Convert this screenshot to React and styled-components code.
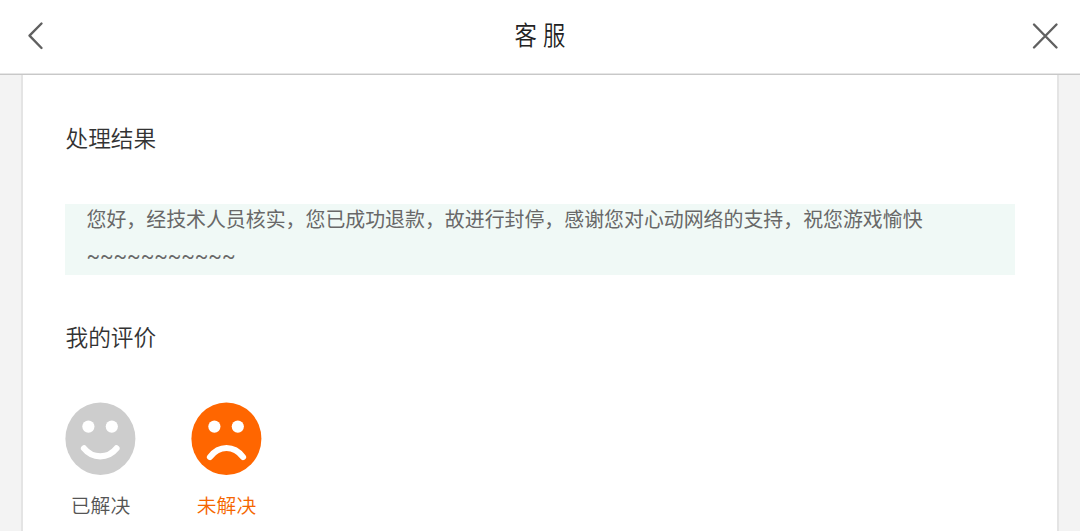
import React, { useState } from "react";
import styled, { createGlobalStyle } from "styled-components";

const GlobalStyle = createGlobalStyle`
  * {
    box-sizing: border-box;
  }
  body {
    margin: 0;
    overflow: hidden;
    background: #f3f3f3;
    font-family: Roboto, "Noto Sans CJK SC", sans-serif;
  }
`

const Page = styled.div`
  display: flex;
  flex-direction: column;
  height: 100vh;
`
const Header = styled.header`
  display: flex;
  flex: none;
  align-items: center;
  justify-content: space-between;
  height: 75px;
  padding: 0 20px 3px 24px;
  background: #fff;
  border-bottom: 1px solid #c8c8c8;
  box-shadow: 0 -1px 0 #e6e6e6 inset;
`
const IconButton = styled.button`
  display: flex;
  padding: 0;
  border: 0;
  background: none;
  color: #606060;
`
const StrokeIcon = styled.svg`
  fill: none;
  stroke: currentColor;
  stroke-width: 2.4;
  stroke-linecap: round;
  stroke-linejoin: round;
`
const Title = styled.h1`
  margin: 1px 0 0 9px;
  font-size: 26px;
  line-height: 36px;
  font-weight: 350;
  letter-spacing: 7px;
  color: #222;
  transform: scaleX(0.86);
`
const Card = styled.main`
  flex: 1;
  min-height: 0;
  margin: 0 21px;
  padding: 44px 42px 0;
  background: #fff;
  border: solid #e4e4e4;
  border-width: 0 2px;
`
const Heading = styled.h2`
  margin: 0;
  padding: 1px 0 0 0.5px;
  font-size: 22.7px;
  line-height: 39px;
  font-weight: 350;
  color: #333;
`
const Reply = styled.p`
  height: 71px;
  margin: 44.5px 0 43.5px;
  padding: 0 21.5px;
  background: #f0f9f6;
  font-size: 19.91px;
  color: #686868;
`
const ReplyLine = styled.span`
  display: block;
  height: 35px;
  line-height: ${props => props.$tight ? '34px' : '36px'};
`
const Ratings = styled.div`
  display: flex;
  gap: 55px;
  margin-top: 44px;
`
const RatingButton = styled.button`
  display: flex;
  flex-direction: column;
  align-items: center;
  width: 71px;
  padding: 0;
  border: 0;
  background: none;
  font-family: inherit;
  font-size: 19.8px;
  font-weight: 350;
  line-height: 30px;
  color: ${props => props.$active ? '#f56600' : '#555'};
`
const Face = styled.svg`
  display: block;
  margin-bottom: 17px;
  color: ${props => props.$active ? '#f60' : '#cdcdcd'};
`

const ratings = [
  { id: 'solved', label: '已解决', mouth: 'M19 46.4 C27.5 57 43 57 51.5 46.4' },
  { id: 'unsolved', label: '未解决', mouth: 'M19 55 C28 43 43 43 52 55' },
]

function Rating(props) {
  return <RatingButton $active={props.active} onClick={props.onSelect}>
    <Face $active={props.active} width="71" height="73" viewBox="0 0 71 73">
      <ellipse cx="35.4" cy="36.7" rx="35" ry="36.2" fill="currentColor"/>
      <circle cx="23.4" cy="24.6" r="6.1" fill="#fff"/>
      <circle cx="46.8" cy="24.6" r="6.1" fill="#fff"/>
      <path d={props.mouth} fill="none" stroke="#fff" strokeWidth="6.2" strokeLinecap="round"/>
    </Face>
    {props.label}
  </RatingButton>
}

function App() {
  const [selected, setSelected] = useState('unsolved');

  return <Page>
    <GlobalStyle/>
    <Header>
      <IconButton aria-label="返回">
        <StrokeIcon width="24" height="30" viewBox="0 0 24 30">
          <path d="M17.5 2.5 L5.5 14.7 L17.5 27"/>
        </StrokeIcon>
      </IconButton>
      <Title>客服</Title>
      <IconButton aria-label="关闭">
        <StrokeIcon width="30" height="30" viewBox="0 0 30 30">
          <path d="M4 3.5 L26.5 26.5 M26.5 3.5 L4 26.5"/>
        </StrokeIcon>
      </IconButton>
    </Header>
    <Card>
      <Heading>处理结果</Heading>
      <Reply>
        <ReplyLine $tight>您好，经技术人员核实，您已成功退款，故进行封停，感谢您对心动网络的支持，祝您游戏愉快</ReplyLine>
        <ReplyLine>~~~~~~~~~~~</ReplyLine>
      </Reply>
      <Heading>我的评价</Heading>
      <Ratings>
        {ratings.map(item => <Rating
          key={item.id}
          label={item.label}
          mouth={item.mouth}
          active={item.id === selected}
          onSelect={() => setSelected(item.id)}
        />)}
      </Ratings>
    </Card>
  </Page>
}

export default App;
